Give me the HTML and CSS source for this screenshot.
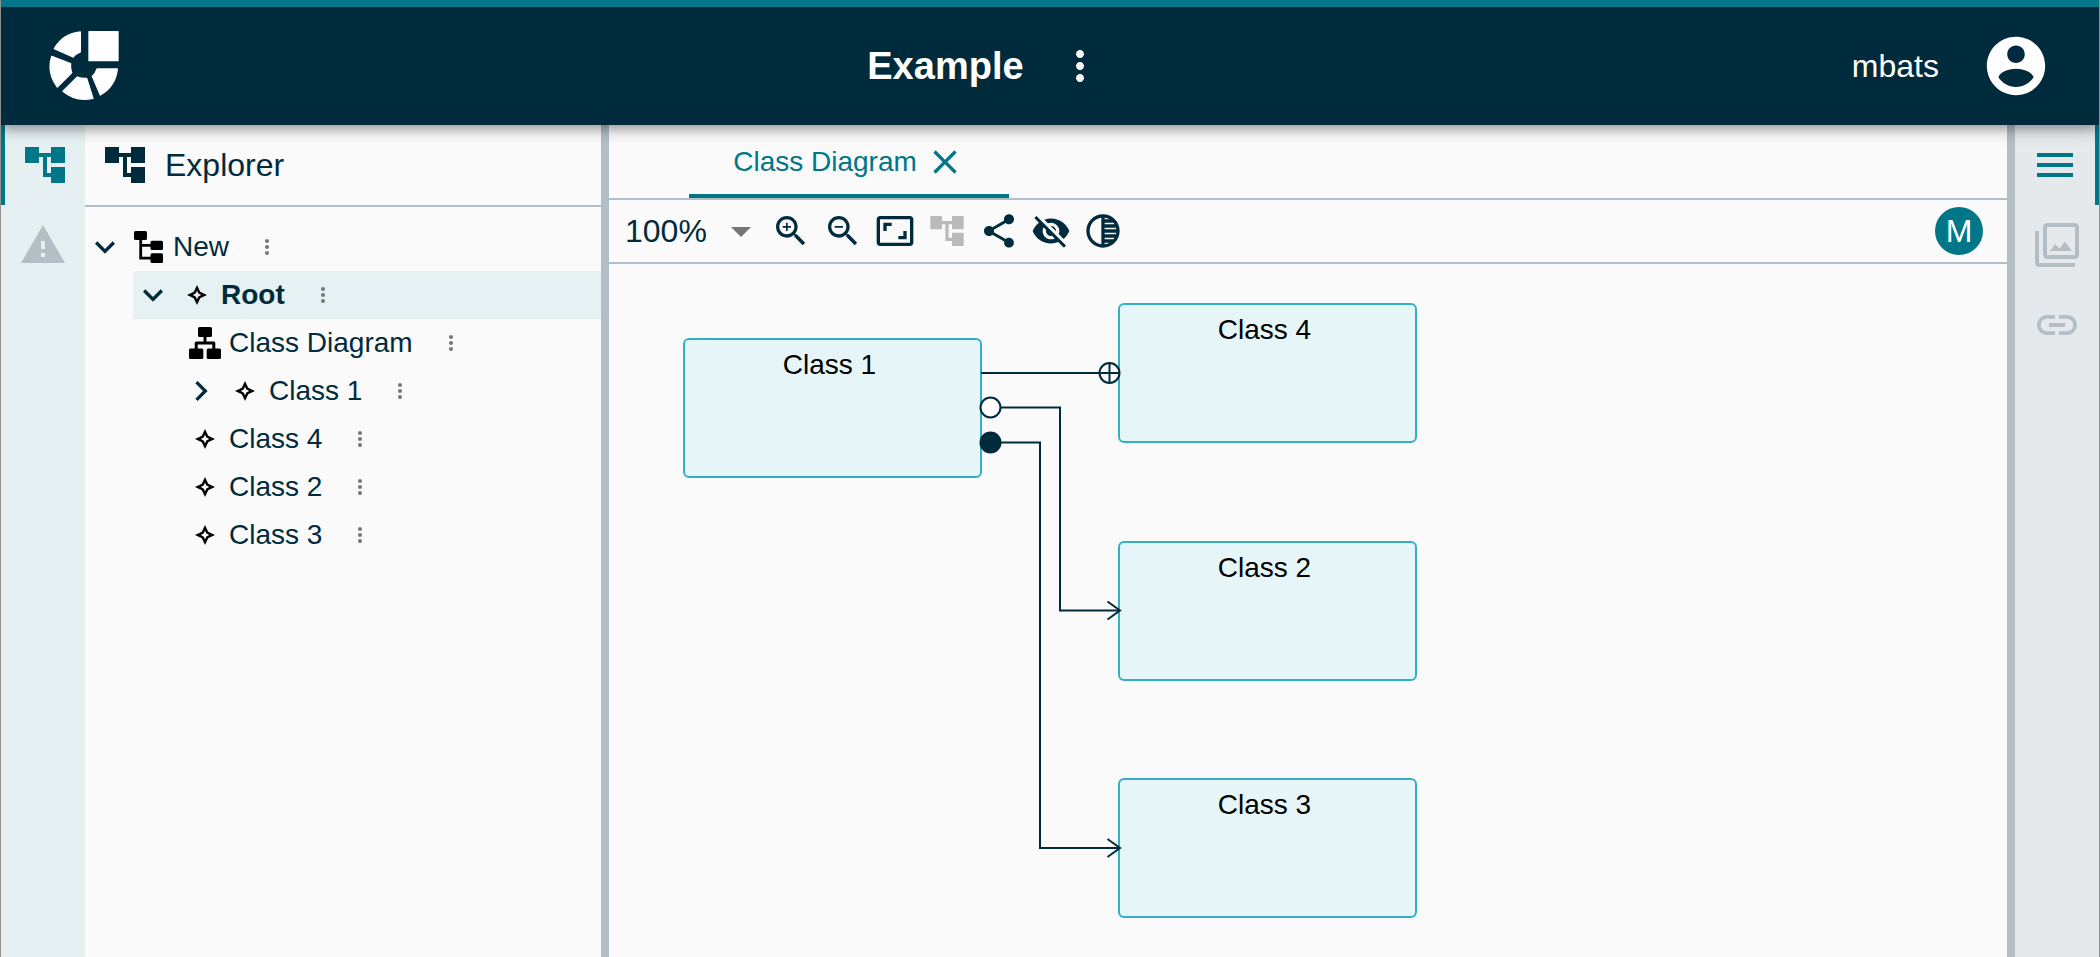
FILE: index.html
```html
<!DOCTYPE html>
<html lang="en">
<head>
<meta charset="utf-8">
<title>Example</title>
<link rel="stylesheet" href="styles.css">
</head>
<body>
<svg class="symbols" aria-hidden="true">
  <symbol id="tree" viewBox="0 0 24 24"><path d="M22 11V3h-7v3H9V3H2v8h7V8h2v10h4v3h7v-8h-7v3h-2V8h2v3z"/></symbol>
  <symbol id="warning" viewBox="0 0 24 24"><path d="M1 21h22L12 2 1 21zm12-3h-2v-2h2v2zm0-4h-2v-4h2v4z"/></symbol>
  <symbol id="more" viewBox="0 0 24 24"><path d="M12 8c1.1 0 2-.9 2-2s-.9-2-2-2-2 .9-2 2 .9 2 2 2zm0 2c-1.1 0-2 .9-2 2s.9 2 2 2 2-.9 2-2-.9-2-2-2zm0 6c-1.1 0-2 .9-2 2s.9 2 2 2 2-.9 2-2-.9-2-2-2z"/></symbol>
  <symbol id="expand" viewBox="0 0 24 24"><path d="M16.59 8.59 12 13.17 7.41 8.59 6 10l6 6 6-6z"/></symbol>
  <symbol id="collapsed" viewBox="0 0 24 24"><path d="M10 6 8.59 7.41 13.17 12l-4.58 4.59L10 18l6-6z"/></symbol>
  <symbol id="project" viewBox="0 0 32 32"><rect x="1" width="13" height="9" rx="1.5"/><rect x="17.5" y="9.7" width="12.5" height="9.3" rx="1.5"/><rect x="17.5" y="22.3" width="12.5" height="9.7" rx="1.5"/><path d="M7.7 8v19.2H18M7.7 14.3H18" fill="none" stroke="currentColor" stroke-width="2.8"/></symbol>
  <symbol id="diagram" viewBox="0 0 32 32"><rect x="9" width="14" height="10" rx="1.5"/><rect y="21.5" width="14.3" height="10.5" rx="1.5"/><rect x="17.7" y="21.5" width="14.3" height="10.5" rx="1.5"/><path d="M16 9v7M7.2 22v-6h17.6v6" fill="none" stroke="currentColor" stroke-width="3" stroke-linejoin="round"/></symbol>
  <symbol id="star" viewBox="0 0 32 32"><path fill-rule="evenodd" d="M16 6l3.2 6.8L26 16l-6.8 3.2L16 26l-3.2-6.8L6 16l6.8-3.2zM16 11.8l-1.4 2.8-2.8 1.4 2.8 1.4 1.4 2.8 1.4-2.8 2.8-1.4-2.8-1.4z"/></symbol>
</svg>

<header class="navbar">
  <a class="logo" href="#" aria-label="Home">
    <svg viewBox="58 34 210 210" width="70" height="70" stroke="currentColor" stroke-width="4" stroke-linejoin="round">
      <rect x="178" y="36" width="87" height="87"/>
      <path d="M152 37A102 102 0 0 0 74 87L130 112Q140 102 152 97z"/>
      <path d="M66 110A102 102 0 0 0 83 202L126 159Q121 146 123 132z"/>
      <path d="M100 215A102 102 0 0 0 190 236L171 176Q155 177 143 172z"/>
      <path d="M212 226A102 102 0 0 0 263 148H202Q198 162 188 170z"/>
    </svg>
  </a>
  <div class="project">
    <h1 class="project-name">Example</h1>
    <button class="project-menu" aria-label="Project menu"><svg class="icon-48"><use href="#more"/></svg></button>
  </div>
  <div class="user">
    <span>mbats</span>
    <button class="plain" aria-label="Account"><svg width="70" height="70" viewBox="0 0 24 24"><path d="M12 2C6.48 2 2 6.48 2 12s4.48 10 10 10 10-4.48 10-10S17.52 2 12 2zm0 3c1.66 0 3 1.34 3 3s-1.34 3-3 3-3-1.34-3-3 1.34-3 3-3zm0 14.2c-2.5 0-4.71-1.28-6-3.22.03-1.99 4-3.08 6-3.08 1.99 0 5.97 1.09 6 3.08-1.29 1.94-3.5 3.22-6 3.22z"/></svg></button>
  </div>
</header>

<div class="workbench">
  <nav class="rail rail-left" aria-label="Left views">
    <button class="rail-item rail-active" aria-label="Explorer"><svg class="icon-48"><use href="#tree"/></svg></button>
    <button class="rail-item" aria-label="Validation"><svg class="icon-48"><use href="#warning"/></svg></button>
  </nav>

  <section class="explorer">
    <div class="explorer-header">
      <svg class="icon-48"><use href="#tree"/></svg>
      <h2 class="explorer-title">Explorer</h2>
    </div>
    <ul class="tree">
      <li>
        <div class="row">
          <button class="plain" aria-label="Collapse"><svg class="icon-40"><use href="#expand"/></svg></button>
          <svg class="icon-32"><use href="#project"/></svg><span>New</span>
          <button class="row-menu" aria-label="More"><svg class="icon-24"><use href="#more"/></svg></button>
        </div>
        <ul class="branch">
          <li>
            <div class="row row-selected">
              <button class="plain" aria-label="Collapse"><svg class="icon-40"><use href="#expand"/></svg></button>
              <svg class="icon-32"><use href="#star"/></svg><span>Root</span>
              <button class="row-menu" aria-label="More"><svg class="icon-24"><use href="#more"/></svg></button>
            </div>
            <ul class="branch">
              <li class="row row-leaf"><svg class="icon-32"><use href="#diagram"/></svg><span>Class Diagram</span><button class="row-menu" aria-label="More"><svg class="icon-24"><use href="#more"/></svg></button></li>
              <li class="row"><button class="plain" aria-label="Expand"><svg class="icon-40"><use href="#collapsed"/></svg></button><svg class="icon-32"><use href="#star"/></svg><span>Class 1</span><button class="row-menu" aria-label="More"><svg class="icon-24"><use href="#more"/></svg></button></li>
              <li class="row row-leaf"><svg class="icon-32"><use href="#star"/></svg><span>Class 4</span><button class="row-menu" aria-label="More"><svg class="icon-24"><use href="#more"/></svg></button></li>
              <li class="row row-leaf"><svg class="icon-32"><use href="#star"/></svg><span>Class 2</span><button class="row-menu" aria-label="More"><svg class="icon-24"><use href="#more"/></svg></button></li>
              <li class="row row-leaf"><svg class="icon-32"><use href="#star"/></svg><span>Class 3</span><button class="row-menu" aria-label="More"><svg class="icon-24"><use href="#more"/></svg></button></li>
            </ul>
          </li>
        </ul>
      </li>
    </ul>
  </section>

  <div class="splitter"></div>

  <main class="editor">
    <div class="tabs">
      <div class="tab">
        <button class="tab-label">Class Diagram</button>
        <button class="plain" aria-label="Close"><svg class="icon-40" viewBox="0 0 24 24"><path d="M19 6.41 17.59 5 12 10.59 6.41 5 5 6.41 10.59 12 5 17.59 6.41 19 12 13.41 17.59 19 19 17.59 13.41 12z"/></svg></button>
      </div>
    </div>
    <div class="toolbar">
      <div class="zoom">
        <select class="zoom-select" aria-label="Zoom level"><option>100%</option></select>
        <svg class="icon-48 zoom-arrow" viewBox="0 0 24 24"><path d="M7 10l5 5 5-5z"/></svg>
      </div>
      <button class="tool" aria-label="Zoom in"><svg class="icon-40" viewBox="0 0 24 24"><path d="M15.5 14h-.79l-.28-.27C15.41 12.59 16 11.11 16 9.5 16 5.91 13.09 3 9.5 3S3 5.91 3 9.5 5.91 16 9.5 16c1.61 0 3.09-.59 4.23-1.57l.27.28v.79l5 4.99L20.49 19l-4.99-5zm-6 0C7.01 14 5 11.99 5 9.5S7.01 5 9.5 5 14 7.01 14 9.5 11.99 14 9.5 14zM12 10h-2v2H9v-2H7V9h2V7h1v2h2v1z"/></svg></button>
      <button class="tool" aria-label="Zoom out"><svg class="icon-40" viewBox="0 0 24 24"><path d="M15.5 14h-.79l-.28-.27C15.41 12.59 16 11.11 16 9.5 16 5.91 13.09 3 9.5 3S3 5.91 3 9.5 5.91 16 9.5 16c1.61 0 3.09-.59 4.23-1.57l.27.28v.79l5 4.99L20.49 19l-4.99-5zm-6 0C7.01 14 5 11.99 5 9.5S7.01 5 9.5 5 14 7.01 14 9.5 11.99 14 9.5 14zM7 9h5v1H7z"/></svg></button>
      <button class="tool" aria-label="Fit to screen"><svg class="icon-40" viewBox="0 0 24 24"><path d="M19 12h-2v3h-3v2h5v-5zM7 9h3V7H5v5h2V9zm14-6H3c-1.1 0-2 .9-2 2v14c0 1.1.9 2 2 2h18c1.1 0 2-.9 2-2V5c0-1.1-.9-2-2-2zm0 16.01H3V4.99h18v14.02z"/></svg></button>
      <button class="tool" aria-label="Arrange all" disabled><svg class="icon-40"><use href="#tree"/></svg></button>
      <button class="tool" aria-label="Share"><svg class="icon-40" viewBox="0 0 24 24"><path d="M18 16.08c-.76 0-1.44.3-1.96.77L8.91 12.7c.05-.23.09-.46.09-.7s-.04-.47-.09-.7l7.05-4.11c.54.5 1.25.81 2.04.81 1.66 0 3-1.34 3-3s-1.34-3-3-3-3 1.34-3 3c0 .24.04.47.09.7L8.04 9.81C7.5 9.31 6.79 9 6 9c-1.66 0-3 1.34-3 3s1.34 3 3 3c.79 0 1.5-.31 2.04-.81l7.12 4.16c-.05.21-.08.43-.08.65 0 1.61 1.31 2.92 2.92 2.92s2.92-1.31 2.92-2.92-1.31-2.92-2.92-2.92z"/></svg></button>
      <button class="tool" aria-label="Hidden elements"><svg class="icon-40" viewBox="0 0 24 24"><path d="M12 7c2.76 0 5 2.24 5 5 0 .65-.13 1.26-.36 1.83l2.92 2.92c1.51-1.26 2.7-2.89 3.43-4.75-1.73-4.39-6-7.5-11-7.5-1.4 0-2.74.25-3.98.7l2.16 2.16C10.74 7.13 11.35 7 12 7zM2 4.27l2.28 2.28.46.46C3.08 8.3 1.78 10.02 1 12c1.73 4.39 6 7.5 11 7.5 1.55 0 3.03-.3 4.38-.84l.42.42L19.73 22 21 20.73 3.27 3 2 4.27zM7.53 9.8l1.55 1.55c-.05.21-.08.43-.08.65 0 1.66 1.34 3 3 3 .22 0 .44-.03.65-.08l1.55 1.55c-.67.33-1.41.53-2.2.53-2.76 0-5-2.24-5-5 0-.79.2-1.53.53-2.2zm4.31-.78 3.15 3.15.02-.16c0-1.66-1.34-3-3-3l-.17.01z"/></svg></button>
      <button class="tool" aria-label="Faded elements"><svg class="icon-40" viewBox="0 0 24 24"><path d="M12 2C6.48 2 2 6.48 2 12s4.48 10 10 10 10-4.48 10-10S17.52 2 12 2zm-1 17.93c-3.94-.49-7-3.85-7-7.93s3.05-7.44 7-7.93v15.86zm2-15.86c1.03.13 2 .45 2.87.93H13v-.93zM13 7h5.24c.25.31.48.65.68 1H13V7zm0 3h6.74c.08.33.15.66.19 1H13v-1zm0 9.93V19h2.87c-.87.48-1.84.8-2.87.93zM18.24 17H13v-1h5.92c-.2.35-.43.69-.68 1zm1.5-3H13v-1h6.93c-.04.34-.11.67-.19 1z"/></svg></button>
      <span class="avatar">M</span>
    </div>

    <div class="canvas">
      <div class="node node-1">Class 1</div>
      <div class="node node-4">Class 4</div>
      <div class="node node-2">Class 2</div>
      <div class="node node-3">Class 3</div>
      <svg class="edges" width="520" height="640" stroke="#002b3c" stroke-width="2">
        <path d="M372 109H511M500.5 99V119"/>
        <circle cx="500.5" cy="109" r="10"/>
        <path d="M392 143.5H451V346.5H510"/>
        <circle cx="381.5" cy="143.5" r="10" fill="#fff"/>
        <path d="M392 178.5H431V584H510"/>
        <circle cx="381.5" cy="178.5" r="10" fill="#002b3c"/>
        <path d="M498.5 337.5L511 346.5 498.5 355.5M498.5 575L511 584 498.5 593"/>
      </svg>
    </div>
  </main>

  <div class="splitter"></div>

  <nav class="rail rail-right" aria-label="Right views">
    <button class="rail-item rail-active" aria-label="Details"><svg class="icon-48" viewBox="0 0 24 24"><path d="M3 18h18v-2H3v2zm0-5h18v-2H3v2zm0-7v2h18V6H3z"/></svg></button>
    <button class="rail-item" aria-label="Representations"><svg class="icon-48" viewBox="0 0 24 24"><path d="M15.96 10.29l-2.75 3.54-1.96-2.36L8.5 15h11l-3.54-4.71zM3 5H1v16c0 1.1.9 2 2 2h18v-2H3V5zm18-4H7c-1.1 0-2 .9-2 2v14c0 1.1.9 2 2 2h14c1.1 0 2-.9 2-2V3c0-1.1-.9-2-2-2zm0 16H7V3h14v14z"/></svg></button>
    <button class="rail-item" aria-label="Related elements"><svg class="icon-48" viewBox="0 0 24 24"><path d="M3.9 12c0-1.71 1.39-3.1 3.1-3.1h4V7H7c-2.76 0-5 2.24-5 5s2.24 5 5 5h4v-1.9H7c-1.71 0-3.1-1.39-3.1-3.1zM8 13h8v-2H8v2zm9-6h-4v1.9h4c1.71 0 3.1 1.39 3.1 3.1s-1.39 3.1-3.1 3.1h-4V17h4c2.76 0 5-2.24 5-5s-2.24-5-5-5z"/></svg></button>
  </nav>
</div>
</body>
</html>
```

FILE: styles.css
```css
:root {
  --navy: #002b3c;
  --teal: #007788;
  --grey: #b3bfc5;
  --paper: #fafafa;
}

* { box-sizing: border-box; }

body {
  margin: 0;
  min-height: 100vh;
  display: flex;
  flex-direction: column;
  border: 0 solid #919191;
  border-width: 0 1px;
  background: var(--paper);
  color: var(--navy);
  font: 28px/32px "Liberation Sans", Arial, sans-serif;
}

svg { display: block; flex: none; fill: currentColor; }
.symbols { position: absolute; width: 0; height: 0; }
.icon-24 { width: 24px; height: 24px; }
.icon-32 { width: 32px; height: 32px; }
.icon-40 { width: 40px; height: 40px; }
.icon-48 { width: 48px; height: 48px; }

button {
  margin: 0;
  padding: 0;
  border: 0;
  background: none;
  color: inherit;
  font: inherit;
  cursor: pointer;
}

h1, h2, ul { margin: 0; padding: 0; }
ul { list-style: none; }

/* Top bar */
.navbar {
  position: relative;
  z-index: 1;
  display: flex;
  align-items: center;
  justify-content: space-between;
  padding: 11px 48px;
  border-top: 7px solid var(--teal);
  background: var(--navy);
  color: #fff;
  box-shadow: 0 4px 8px -2px rgba(0, 0, 0, .2), 0 8px 10px rgba(0, 0, 0, .14), 0 2px 20px rgba(0, 0, 0, .12);
}
.logo { padding-right: 24px; color: #fff; }
.project { display: flex; align-items: center; gap: 8px; }
.project-name { font-size: 38px; line-height: 44px; }
.project-menu { padding: 24px; }
.user { display: flex; align-items: center; gap: 42px; font-size: 32px; }

/* Workbench */
.workbench { flex: 1; display: flex; }
.rail { flex: none; width: 84px; display: flex; flex-direction: column; color: var(--grey); }
.rail-left { background: #e6eff2; }
.rail-right { background: #e5e9ec; }
.rail-item { display: flex; align-items: center; justify-content: center; height: 80px; }
.rail-active { color: var(--teal); }
.rail-left .rail-active { border-left: 4px solid; }
.rail-right .rail-active { border-right: 4px solid; }
.splitter { flex: none; width: 8px; background: var(--grey); cursor: col-resize; }

/* Explorer */
.explorer { flex: 0 0 516px; }
.explorer-header {
  display: flex;
  align-items: center;
  gap: 16px;
  padding: 16px;
  border-bottom: 2px solid var(--grey);
}
.explorer-title { font-size: 32px; font-weight: 400; line-height: 48px; }
.tree { padding-top: 16px; }
.branch { padding-left: 48px; }
.row { display: flex; align-items: center; gap: 8px; height: 48px; }
.row > svg { color: #000; }
.row-leaf { padding-left: 8px; }
.row-selected { background: #e5f1f3; font-weight: 700; }
.row-menu { padding-left: 18px; color: #757575; }

/* Editor */
.editor { flex: 1; min-width: 0; display: flex; flex-direction: column; }
.tabs { display: flex; padding-left: 80px; border-bottom: 2px solid var(--grey); }
.tab {
  width: 320px;
  height: 73px;
  display: flex;
  align-items: center;
  justify-content: center;
  gap: 8px;
  padding-top: 4px;
  border-bottom: 4px solid var(--teal);
  color: var(--teal);
}
.toolbar {
  display: flex;
  align-items: center;
  padding: 7px 24px 7px 16px;
  border-bottom: 2px solid var(--grey);
}
.zoom { display: grid; width: 140px; align-items: center; }
.zoom-select {
  grid-area: 1 / 1;
  height: 48px;
  padding: 0;
  border: 0;
  appearance: none;
  background: none;
  color: inherit;
  font: inherit;
  font-size: 32px;
}
.zoom-arrow { grid-area: 1 / 1; justify-self: end; color: #757575; pointer-events: none; }
.tool { padding: 0 6px; }
.tool:disabled { color: #bababa; }
.avatar {
  width: 48px;
  height: 48px;
  margin-left: auto;
  border-radius: 50%;
  background: var(--teal);
  color: #fff;
  font-size: 32px;
  line-height: 48px;
  text-align: center;
}

/* Diagram */
.canvas { position: relative; flex: 1; min-height: 680px; }
.node {
  position: absolute;
  width: 299px;
  height: 140px;
  padding: 9px 6px 9px 0;
  border: 2px solid #33b0c3;
  border-radius: 6px;
  background: #e5f5f8;
  color: #000;
  text-align: center;
}
.node-1 { left: 74px; top: 74px; }
.node-4 { left: 509px; top: 39px; }
.node-2 { left: 509px; top: 277px; }
.node-3 { left: 509px; top: 514px; }
.edges { position: absolute; left: 0; top: 0; fill: none; }
```
